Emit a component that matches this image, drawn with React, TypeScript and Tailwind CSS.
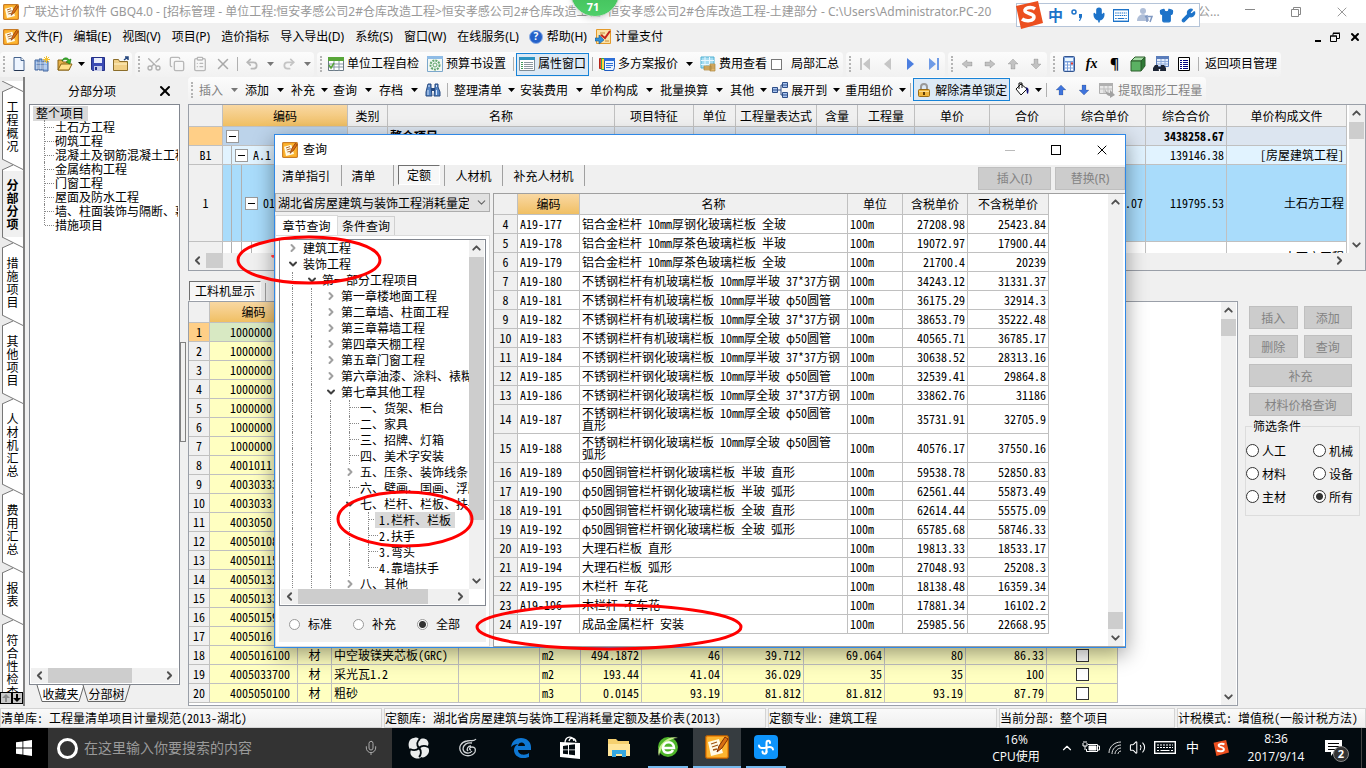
import type { ReactNode } from 'react';
import {
  ChevronDown,
  ChevronLeft,
  ChevronRight,
  ChevronUp,
  ClipboardList,
  Copy,
  Mic,
  Redo2,
  Scissors,
  Shirt,
  Undo2,
  Volume2,
  Wrench,
  X,
} from 'lucide-react';

/* ---------- data ---------- */

const sideTabs = ['工程概况', '分部分项', '措施项目', '其他项目', '人材机汇总', '费用汇总', '报表', '符合性检查结果'];

const sections = [
  '土石方工程',
  '砌筑工程',
  '混凝土及钢筋混凝土工程',
  '金属结构工程',
  '门窗工程',
  '屋面及防水工程',
  '墙、柱面装饰与隔断、幕墙工程',
  '措施项目',
];

const materialCodes = [
  '1000000', '1000000', '1000000', '1000000', '1000000', '1000000', '1000000', '4001011', '40030333', '4003033',
  '4003050', '40050108', '40050115', '40050132', '40050133', '40050159', '4005016',
];

const materials = [
  ['4005016100', '材', '中空玻镁夹芯板(GRC)', '', 'm2', '494.1872', '46', '39.712', '69.064', '80', '86.33'],
  ['4005033700', '材', '采光瓦1.2', '', 'm2', '193.44', '41.04', '36.029', '35', '35', '100'],
  ['4005050100', '材', '粗砂', '', 'm3', '0.0145', '93.19', '81.812', '81.812', '93.19', '87.79'],
];

const quotas = [
  ['铝合金栏杆 10mm厚钢化玻璃栏板 全玻', '27208.98', '25423.84'],
  ['铝合金栏杆 10mm厚茶色玻璃栏板 半玻', '19072.97', '17900.44'],
  ['铝合金栏杆 10mm厚茶色玻璃栏板 全玻', '21700.4', '20239'],
  ['不锈钢栏杆有机玻璃栏板 10mm厚半玻 37*37方钢', '34243.12', '31331.37'],
  ['不锈钢栏杆有机玻璃栏板 10mm厚半玻 φ50圆管', '36175.29', '32914.3'],
  ['不锈钢栏杆有机玻璃栏板 10mm厚全玻 37*37方钢', '38653.79', '35222.48'],
  ['不锈钢栏杆有机玻璃栏板 10mm厚全玻 φ50圆管', '40565.71', '36785.17'],
  ['不锈钢栏杆钢化玻璃栏板 10mm厚半玻 37*37方钢', '30638.52', '28313.16'],
  ['不锈钢栏杆钢化玻璃栏板 10mm厚半玻 φ50圆管', '32539.41', '29864.8'],
  ['不锈钢栏杆钢化玻璃栏板 10mm厚全玻 37*37方钢', '33862.76', '31186'],
  ['不锈钢栏杆钢化玻璃栏板 10mm厚全玻 φ50圆管\n直形', '35731.91', '32705.9'],
  ['不锈钢栏杆钢化玻璃栏板 10mm厚全玻 φ50圆管\n弧形', '40576.17', '37550.16'],
  ['φ50圆铜管栏杆钢化玻璃栏板 半玻 直形', '59538.78', '52850.83'],
  ['φ50圆铜管栏杆钢化玻璃栏板 半玻 弧形', '62561.44', '55873.49'],
  ['φ50圆铜管栏杆钢化玻璃栏板 全玻 直形', '62614.44', '55575.09'],
  ['φ50圆铜管栏杆钢化玻璃栏板 全玻 弧形', '65785.68', '58746.33'],
  ['大理石栏板 直形', '19813.33', '18533.17'],
  ['大理石栏板 弧形', '27048.93', '25208.3'],
  ['木栏杆 车花', '18138.48', '16359.34'],
  ['木栏杆 不车花', '17881.34', '16102.2'],
  ['成品金属栏杆 安装', '25985.56', '22668.95'],
];

type Node = { text: string; level: number; state: 'open' | 'closed' | 'leaf' | 'last'; selected?: boolean };

const chapters: Node[] = [
  { text: '建筑工程', level: 0, state: 'closed' },
  { text: '装饰工程', level: 0, state: 'open' },
  { text: '第一部分工程项目', level: 1, state: 'open' },
  { text: '第一章楼地面工程', level: 2, state: 'closed' },
  { text: '第二章墙、柱面工程', level: 2, state: 'closed' },
  { text: '第三章幕墙工程', level: 2, state: 'closed' },
  { text: '第四章天棚工程', level: 2, state: 'closed' },
  { text: '第五章门窗工程', level: 2, state: 'closed' },
  { text: '第六章油漆、涂料、裱糊工程', level: 2, state: 'closed' },
  { text: '第七章其他工程', level: 2, state: 'open' },
  { text: '一、货架、柜台', level: 3, state: 'leaf' },
  { text: '二、家具', level: 3, state: 'leaf' },
  { text: '三、招牌、灯箱', level: 3, state: 'leaf' },
  { text: '四、美术字安装', level: 3, state: 'leaf' },
  { text: '五、压条、装饰线条', level: 3, state: 'closed' },
  { text: '六、壁画、国画、浮雕', level: 3, state: 'leaf' },
  { text: '七、栏杆、栏板、扶手', level: 3, state: 'open' },
  { text: '1.栏杆、栏板', level: 4, state: 'leaf', selected: true },
  { text: '2.扶手', level: 4, state: 'leaf' },
  { text: '3.弯头', level: 4, state: 'leaf' },
  { text: '4.靠墙扶手', level: 4, state: 'last' },
  { text: '八、其他', level: 3, state: 'closed' },
];

/* ---------- icons ---------- */

function AppIcon({ className = 'size-4' }: { className?: string }) {
  return (
    <svg viewBox="0 0 24 24" className={`shrink-0 ${className}`}>
      <rect x="0.5" y="0.5" width="23" height="23" rx="2" fill="#ee8c12" stroke="#a85a08" />
      <rect x="2" y="2" width="20" height="20" rx="1" fill="#fbb431" />
      <path d="M3 7l11-3 4 14-12 3z" fill="#fffbe8" />
      <path d="M6 9l6-2M7 12l6-2M8 15l4-1" stroke="#a05414" strokeWidth="1.3" />
      <path d="M20 2l-6 9-2 6 5-4 6-9z" fill="#d96f12" stroke="#7c2d06" />
    </svg>
  );
}

function NewIcon() {
  return (
    <svg viewBox="0 0 16 16" className="size-4">
      <path d="M3 1.500h7l3 3v10H3z" fill="#eef5ff" stroke="#45638d" />
      <path d="M10 1.500v3h3" fill="#fff" stroke="#45638d" />
      <path d="M12.500 14.500h-9" stroke="#24344f" />
    </svg>
  );
}

function LibraryIcon() {
  return (
    <svg viewBox="0 0 16 16" className="size-4">
      <path d="M1 4h3v10H1zM5 3h3v11H5zM9 5h5v10H9z" fill="#8fb4e6" stroke="#46699f" />
      <path d="M2 7h11M2 10h11M2 12h11" stroke="#fff" strokeWidth="0.7" />
      <path d="M12.500 0v7M9 3.500h7M10 1l5 5M15 1l-5 5" stroke="#f2c12e" />
    </svg>
  );
}

function OpenIcon() {
  return (
    <svg viewBox="0 0 16 16" className="size-4">
      <path d="M1 14V4h4l1 2h6v8z" fill="#e6b04a" stroke="#8a6414" />
      <path d="M1 14l3-6h11l-3 6z" fill="#ffe08a" stroke="#8a6414" />
      <path d="M5 5c1-4 6-4 7-1l2-1-1 5-4-2 2-1c-1-2-4-2-6 0z" fill="#38b62c" stroke="#16700f" strokeWidth="0.6" />
    </svg>
  );
}

function SaveIcon() {
  return (
    <svg viewBox="0 0 16 16" className="size-4">
      <path d="M1.500 1.500h13v13h-12l-1-1z" fill="#3b4bb4" stroke="#232f86" />
      <path d="M4 2h8v5H4z" fill="#e9edfb" />
      <path d="M4 10h8v5H4z" fill="#c7cdea" />
      <path d="M5 11h2v3H5z" fill="#232f86" />
    </svg>
  );
}

function FolderIcon() {
  return (
    <svg viewBox="0 0 16 16" className="size-4">
      <path d="M0.500 14.500v-11h5l1 2h8v9z" fill="#f0cf86" stroke="#8b6d2a" />
      <path d="M1 8h13" stroke="#fff2c9" />
      <path d="M11 4l4-3M12 1h3v3" stroke="#26477e" fill="none" strokeWidth="1.500" />
    </svg>
  );
}

function SheetIcon({ head }: { head: string }) {
  return (
    <svg viewBox="0 0 16 16" className="size-4 shrink-0">
      <path d="M0.500 1.500h15v13H0.500z" fill="#fff" stroke="#6b7a86" />
      <path d="M0 1h16v4H0z" fill={head} />
      <path d="M1 8h14M1 11h14M6 5v10M11 5v10" stroke="#8797a3" />
      <path d="M1 9l2 3 3-5" stroke={head} strokeWidth="1.500" fill="none" />
    </svg>
  );
}

function SheetArrowIcon() {
  return (
    <svg viewBox="0 0 16 16" className="size-4 shrink-0">
      <path d="M0.500 1.500h13v10H0.500z" fill="#e8e8e8" stroke="#b0b0b0" />
      <path d="M0 1h14v3H0z" fill="#b0b0b0" />
      <path d="M1 7h12M5 4v7M9 4v7" stroke="#bdbdbd" />
      <path d="M6 7c1 3 3 4 5 4V8l5 5-5 3v-2c-3 0-5-3-5-7z" fill="#a2a2a2" />
    </svg>
  );
}

function SettingsSheetIcon() {
  return (
    <svg viewBox="0 0 16 16" className="size-4 shrink-0">
      <path d="M0.500 0.500h15v15H0.500z" fill="#f2f8f4" stroke="#7ba7cc" />
      <path d="M0 0h16v3H0z" fill="#8fbce6" />
      <circle cx="8" cy="9" r="4.500" fill="none" stroke="#62a56c" strokeWidth="2" strokeDasharray="2 1" />
      <circle cx="8" cy="9" r="2" fill="none" stroke="#62a56c" />
    </svg>
  );
}

function PanelIcon() {
  return (
    <svg viewBox="0 0 16 16" className="size-4 shrink-0">
      <path d="M0.500 1.500h15v13H0.500z" fill="#fff" stroke="#7e8c97" />
      <path d="M0 1h16v3H0z" fill="#2b93c2" />
      <path d="M2 6.500h2M2 8.500h2M2 10.500h2M2 12.500h2" stroke="#3f9b58" />
      <path d="M5 6.500h9M5 8.500h9M5 10.500h9M5 12.500h9" stroke="#8b979f" />
    </svg>
  );
}

function PlansIcon() {
  return (
    <svg viewBox="0 0 16 16" className="size-4 shrink-0">
      <path d="M0.500 2.500h5v10h-5z" fill="#f04a3a" stroke="#b52418" />
      <path d="M2.500 2.500h5v11h-5z" fill="#ffd83a" stroke="#3aa24a" />
      <path d="M5.500 2.500h10v9l-1 3h-9z" fill="#e9f2ff" stroke="#1e5bc0" />
      <path d="M5 2h11v3H5z" fill="#2e6fd6" />
      <path d="M7 7.500h7M7 9.500h7M7 11.500h5" stroke="#2e6fd6" />
    </svg>
  );
}

function FeeIcon() {
  return (
    <svg viewBox="0 0 16 16" className="size-4 shrink-0">
      <path d="M1 1h13v11H1z" fill="#a6dcf1" stroke="#4fb1d4" />
      <path d="M1 4.500h13M1 8.500h13M5 1v11M9.500 1v11" stroke="#e9f8ff" />
      <path d="M4 10h7v4H4zM10 8h5v7h-5z" fill="#e0b770" stroke="#a9843a" strokeWidth="0.7" />
      <path d="M10 10h5M10 12h5M4 12h6" stroke="#a9843a" strokeWidth="0.7" />
    </svg>
  );
}

function BinocularsIcon() {
  return (
    <svg viewBox="0 0 16 16" className="size-4">
      <path d="M3 2h3v3l1 9H1v-4zM10 2h3v3l2 5v4H9l1-9z" fill="#5585c4" stroke="#27497f" />
      <path d="M6 6h4v3H6z" fill="#27497f" />
      <path d="M3 8v5M11.500 8v5M4 3v2M11.500 3v2" stroke="#d5e5fb" />
    </svg>
  );
}

function ExpandIcon() {
  return (
    <svg viewBox="0 0 16 16" className="size-4 shrink-0">
      <path d="M6 8h3M9 3v10M9 3h2M9 13h2" stroke="#2d4d86" fill="none" />
      <path d="M0.500 5.500h5v5h-5zM10.500 0.500h5v5h-5zM10.500 10.500h5v5h-5z" fill="#a9c5f1" stroke="#2d4d86" />
      <path d="M1 8h4M11 3h4M11 13h4" stroke="#2d4d86" />
    </svg>
  );
}

function LockIcon() {
  return (
    <svg viewBox="0 0 16 16" className="size-4 shrink-0">
      <path d="M5 8V5a3 3 0 0 1 6 0v3" fill="none" stroke="#9a9a9a" strokeWidth="2" />
      <rect x="2.500" y="7.500" width="11" height="7" rx="1" fill="#f0b63c" stroke="#9a6a12" />
      <path d="M3 9.500h10" stroke="#fbdc8c" />
      <path d="M8 10v3" stroke="#5e3d05" strokeWidth="2" />
    </svg>
  );
}

function BucketIcon() {
  return (
    <svg viewBox="0 0 16 16" className="size-4">
      <path d="M2 7l5-5 6 5-6 6z" fill="#fff" stroke="#111" />
      <path d="M5 7V1h3v5" fill="none" stroke="#111" />
      <path d="M12 5c3 1 3 3 2 7-2-1-1-4-2-7z" fill="#12127a" />
    </svg>
  );
}

function ArrowIcon({ dir, color }: { dir: 'left' | 'right' | 'up' | 'down'; color: string }) {
  const paths = {
    left: 'M3 8l5-4v2h5v4H8v2z',
    right: 'M13 8L8 4v2H3v4h5v2z',
    up: 'M8 3l5 5h-3v5H6V8H3z',
    down: 'M8 13l5-5h-3V3H6v5H3z',
  };
  return (
    <svg viewBox="0 0 16 16" className="size-4">
      <path d={paths[dir]} fill={color} stroke="#00000022" />
    </svg>
  );
}

function JumpIcon({ d, color }: { d: string; color: string }) {
  return (
    <svg viewBox="0 0 16 16" className="size-4">
      <path d={d} fill={color} />
    </svg>
  );
}

function CalculatorIcon() {
  return (
    <svg viewBox="0 0 16 16" className="size-4">
      <rect x="2.500" y="0.500" width="11" height="15" rx="1" fill="#7ea2dc" stroke="#33558f" />
      <path d="M4 2h8v3H4z" fill="#e9f7ff" />
      <path d="M4 7.500h8M4 10.500h8M4 13.500h8" stroke="#fff" strokeWidth="2" strokeDasharray="2 1" />
      <path d="M10 7.500h2" stroke="#e23b2e" strokeWidth="2" />
    </svg>
  );
}

function CubeIcon() {
  return (
    <svg viewBox="0 0 16 16" className="size-4">
      <path d="M1 5l4-4h10l-4 4z" fill="#a5dba5" stroke="#2c5f2c" />
      <path d="M11 5l4-4v9l-4 5z" fill="#2f7a36" stroke="#2c5f2c" />
      <path d="M1 5h10v10H1z" fill="#5bb163" stroke="#2c5f2c" />
    </svg>
  );
}

function LookupIcon() {
  return (
    <svg viewBox="0 0 16 16" className="size-4">
      <path d="M3.500 0.500h12v10h-12z" fill="#e4edfb" stroke="#5a7dbb" />
      <path d="M3 0h13v3H3z" fill="#5a7dbb" />
      <path d="M4 5.500h11M4 8h11M8 3v7M12 3v7" stroke="#8eaadb" />
      <path d="M2 9h3l1 6H0v-3zM8 9h3l2 3v3H7zM4 11h4v2H4z" fill="#1c2434" />
    </svg>
  );
}

function ListIcon() {
  return (
    <svg viewBox="0 0 16 16" className="size-4">
      <path d="M2.500 1.500h11v13h-11z" fill="#fff" stroke="#000" />
      <path d="M4 4.500h2M4 6.500h2M4 8.500h2M4 10.500h2M4 12.500h2M7 4.500h5M7 6.500h5M7 8.500h5M7 10.500h5M7 12.500h5" stroke="#000080" />
    </svg>
  );
}

function PayIcon() {
  return (
    <svg viewBox="0 0 16 16" className="size-4">
      <path d="M1.500 0.500h14v14h-14z" fill="#fbe3a8" stroke="#e49a2a" />
      <path d="M5 4h5M5 6h3M10 12h4" stroke="#c58a3a" />
      <path d="M15 2l-5 7-4-3" fill="none" stroke="#c3261c" strokeWidth="2" />
      <path d="M0 9h4V6l5 5-5 4v-3H0z" fill="#2f8fd8" stroke="#155b95" strokeWidth="0.600" />
    </svg>
  );
}

function SogouIcon({ className }: { className: string }) {
  return (
    <svg viewBox="0 0 28 28" className={`shrink-0 ${className}`}>
      <path d="M1 5L23 0l5 22-22 6z" fill="#ec4f1f" />
      <path d="M20 8c-4-3-11-1-10 2s9 2 9 6-8 5-12 2" fill="none" stroke="#fff" strokeWidth="3.500" />
    </svg>
  );
}

/* ---------- small pieces ---------- */

function Caret({ tight, dim }: { tight?: boolean; dim?: boolean }) {
  return (
    <span className={`flex shrink-0 justify-center ${tight ? 'w-[10px]' : 'w-[14px]'}`}>
      <svg viewBox="0 0 7 4" className="h-1 w-[7px]">
        <path d="M0 0h7L3.500 4z" fill={dim ? '#777' : '#000'} />
      </svg>
    </span>
  );
}

function Grip() {
  return (
    <span className="flex w-[7px] shrink-0 justify-center">
      <span className="h-4 border-l-2 border-dotted border-[#b4b4b4]" />
    </span>
  );
}

function Divider() {
  return (
    <span className="flex w-[6px] shrink-0 justify-center">
      <span className="h-[14px] border-l border-[#b0b0b0]" />
    </span>
  );
}

function ToolGroup({ children }: { children: ReactNode }) {
  return (
    <div className="flex h-[25px] shrink-0 items-center rounded-sm bg-gradient-to-b from-[#fcfcfc] to-[#f1f1f1]">
      <Grip />
      {children}
    </div>
  );
}

function IconButton({ label, children }: { label: string; children: ReactNode }) {
  return (
    <button type="button" aria-label={label} className="flex w-[23px] shrink-0 items-center justify-center">
      {children}
    </button>
  );
}

function ToolButton({ icon, children, active, dim }: { icon?: ReactNode; children: ReactNode; active?: boolean; dim?: boolean }) {
  return (
    <button
      type="button"
      className={`flex h-[23px] shrink-0 items-center gap-[3px] whitespace-nowrap ${
        active ? 'border border-[#1883d7] bg-[#dce9f5] px-[2px]' : 'px-1'
      } ${dim ? 'text-[#838383]' : ''}`}
    >
      {icon}
      {children}
    </button>
  );
}

function VScroll({ before, thumb }: { before: string; thumb: string }) {
  return (
    <div className="flex w-[15px] shrink-0 flex-col items-center bg-[#f0f0f0] text-[#505050]">
      <ChevronUp className="h-4 w-[13px] shrink-0" strokeWidth={3.5} />
      <span className={before} />
      <span className={`w-full shrink-0 bg-[#cdcdcd] ${thumb}`} />
      <span className="flex-1" />
      <ChevronDown className="h-4 w-[13px] shrink-0" strokeWidth={3.5} />
    </div>
  );
}

function HScroll({ thumb }: { thumb: string }) {
  return (
    <div className="flex h-[15px] shrink-0 items-center bg-[#f0f0f0] text-[#505050]">
      <ChevronLeft className="h-[13px] w-[17px] shrink-0" strokeWidth={3.5} />
      <span className={`h-full shrink-0 bg-[#cdcdcd] ${thumb}`} />
      <span className="flex-1" />
      <ChevronRight className="h-[13px] w-[17px] shrink-0" strokeWidth={3.5} />
    </div>
  );
}

const gold = 'bg-gradient-to-b from-[#f9d8a2] to-[#f0bf62]';
const cell = 'border-r border-b border-[#c0c0c0] p-0 px-[2px] overflow-hidden whitespace-nowrap';
const head = 'border-r border-b border-[#c0c0c0] p-0 font-normal overflow-hidden whitespace-nowrap';
const grayButton = 'h-[23px] border border-[#bfbfbf] bg-[#cccccc] text-[#838383]';
const radio =
  'appearance-none rounded-full border bg-white checked:bg-[radial-gradient(circle,#333_0_3px,#fff_4px)] shrink-0';

/* ---------- window chrome ---------- */

function TitleBar() {
  return (
    <header className="relative flex h-[23px] shrink-0 items-center bg-white pl-[3px] text-[#999]">
      <AppIcon />
      <span className="ml-1 w-[993px] shrink-0 overflow-hidden whitespace-nowrap">
        广联达计价软件 GBQ4.0 - [招标管理 - 单位工程:恒安孝感公司2#仓库改造工程&gt;恒安孝感公司2#仓库改造工程&gt;恒安孝感公司2#仓库改造工程-土建部分 -
        C:\Users\Administrator.PC-20
      </span>
      <span className="ml-[170px] whitespace-nowrap">感公...</span>
      <div className="ml-auto flex items-center gap-[30px] pr-4">
        <button type="button" aria-label="最小化" className="w-4 pb-1">
          <span className="mx-auto block h-px w-[10px] bg-[#888]" />
        </button>
        <button type="button" aria-label="还原">
          <svg viewBox="0 0 16 16" className="size-4" fill="none" stroke="#888">
            <path d="M3.500 5.500h7v7h-7zM5.500 5V3.500h7v7H11" />
          </svg>
        </button>
        <button type="button" aria-label="关闭">
          <X className="size-4" strokeWidth={1.5} />
        </button>
      </div>

      <div className="absolute -top-[33px] left-[570px] z-10 flex size-[50px] items-end justify-center rounded-full border border-[#cfd8cf] bg-gradient-to-b from-[#35b14c] to-[#4fd06a] pr-1 pb-1 text-[11px] leading-none font-bold text-white shadow-md">
        71
      </div>
      <div className="absolute top-[3px] left-[1016px] z-10 flex h-6 w-[184px] items-center border border-[#b5c4d8] bg-white text-[#1d73c9]">
        <SogouIcon className="-ml-[2px] size-7" />
        <span className="ml-[5px] text-[15px] font-bold">中</span>
        <svg viewBox="0 0 12 12" className="ml-2 size-3 shrink-0">
          <circle cx="3" cy="3" r="2" fill="none" stroke="#1d73c9" strokeWidth="1.500" />
          <path d="M8 5h3v3l-2 4H8l1-3H8z" fill="#1d73c9" />
        </svg>
        <Mic className="ml-2 size-4 shrink-0" strokeWidth={2.5} fill="#1d73c9" />
        <KeyboardIcon className="ml-[6px] h-[13px] w-4" />
        <svg viewBox="0 0 16 16" className="ml-2 size-4 shrink-0" fill="#b0bfd8">
          <circle cx="6" cy="4" r="3" />
          <path d="M0 14c0-9 12-9 12 0z" />
          <path d="M8 10l2-1v6M11 9.500h4l-2 5.500" fill="none" stroke="#7f98c2" strokeWidth="1.500" />
        </svg>
        <Shirt className="ml-[6px] size-[15px] shrink-0" fill="#1d73c9" />
        <Wrench className="ml-[7px] size-[15px] shrink-0" fill="#1d73c9" />
      </div>
    </header>
  );
}

function KeyboardIcon({ className }: { className: string }) {
  return (
    <svg viewBox="0 0 22 13" preserveAspectRatio="none" className={`shrink-0 ${className}`} fill="none" stroke="currentColor">
      <rect x="0.700" y="0.700" width="20.600" height="11.600" strokeWidth="1.400" />
      <path d="M3 4h16M3 6.500h16" strokeDasharray="2 1" strokeWidth="1.200" />
      <path d="M3 9.500h2M6.500 9.500h9M17 9.500h2" strokeWidth="1.200" />
    </svg>
  );
}

function MenuBar() {
  const menus = ['文件(F)', '编辑(E)', '视图(V)', '项目(P)', '造价指标', '导入导出(D)', '系统(S)', '窗口(W)', '在线服务(L)'];
  return (
    <nav className="flex h-7 shrink-0 items-center bg-[#f0f0f0] pl-[3px]">
      <AppIcon />
      <div className="ml-[6px] flex items-center gap-[11px]">
        {menus.map((m) => (
          <button key={m} type="button" className="whitespace-nowrap">
            {m}
          </button>
        ))}
        <button type="button" className="-ml-px flex items-center gap-1 whitespace-nowrap">
          <span className="flex size-[14px] items-center justify-center rounded-full border border-[#8fb0e6] bg-[#2461c9] text-[10px] font-bold text-white">
            ?
          </span>
          帮助(H)
        </button>
        <button type="button" className="-ml-[3px] flex items-center gap-1 whitespace-nowrap">
          <PayIcon />
          计量支付
        </button>
      </div>
      <div className="ml-auto flex items-center gap-[9px] pr-[5px]">
        <button type="button" aria-label="最小化子窗口" className="flex h-[9px] items-end">
          <span className="h-[2px] w-[6px] bg-black" />
        </button>
        <button type="button" aria-label="还原子窗口">
          <svg viewBox="0 0 10 10" className="size-[10px]" fill="none" stroke="#000">
            <path d="M0.500 4h6v5.500h-6zM0 4h7M3 3.500V1.500h6.500v5H7M3 1h7" />
          </svg>
        </button>
        <button type="button" aria-label="关闭子窗口">
          <X className="size-3 text-black" strokeWidth={4} />
        </button>
      </div>
    </nav>
  );
}

function MainToolbar() {
  return (
    <div className="flex h-[26px] shrink-0 items-center gap-[3px] overflow-hidden bg-[#f0f0f0]">
      <ToolGroup>
        <IconButton label="新建"><NewIcon /></IconButton>
        <IconButton label="新建工程"><LibraryIcon /></IconButton>
        <IconButton label="打开"><OpenIcon /></IconButton>
        <Caret tight />
        <IconButton label="保存"><SaveIcon /></IconButton>
        <IconButton label="目录"><FolderIcon /></IconButton>
      </ToolGroup>
      <ToolGroup>
        <IconButton label="剪切"><Scissors className="size-4 -rotate-90 text-[#b0b0b0]" /></IconButton>
        <IconButton label="复制"><Copy className="size-4 text-[#b8b8b8]" /></IconButton>
        <IconButton label="粘贴"><ClipboardList className="size-4 text-[#b8b8b8]" /></IconButton>
        <IconButton label="删除"><X className="size-[18px] text-[#a8a8a8]" /></IconButton>
        <Divider />
        <IconButton label="撤销"><Undo2 className="size-[14px] text-[#b8b8b8]" strokeWidth={3} /></IconButton>
        <Caret dim />
        <IconButton label="重做"><Redo2 className="size-[14px] text-[#c4c4c4]" strokeWidth={3} /></IconButton>
        <Caret dim />
      </ToolGroup>
      <ToolGroup>
        <ToolButton icon={<SheetIcon head="#58a639" />}>单位工程自检</ToolButton>
        <ToolButton icon={<SettingsSheetIcon />}>预算书设置</ToolButton>
        <Divider />
        <ToolButton active icon={<PanelIcon />}>属性窗口</ToolButton>
        <Divider />
        <ToolButton icon={<PlansIcon />}>多方案报价</ToolButton>
        <Caret />
        <ToolButton icon={<FeeIcon />}>费用查看</ToolButton>
        <label className="mr-1 flex items-center gap-[9px] whitespace-nowrap">
          <input type="checkbox" className="size-[11px] appearance-none border border-[#777] bg-white" />
          局部汇总
        </label>
      </ToolGroup>
      <ToolGroup>
        <IconButton label="首条"><JumpIcon color="#c6c6c6" d="M3 2h2v12H3zM13 2v12L6 8z" /></IconButton>
        <IconButton label="上一条"><JumpIcon color="#c6c6c6" d="M11 2v12L4 8z" /></IconButton>
        <IconButton label="下一条"><JumpIcon color="#4c7fe0" d="M4 2v12l7-6z" /></IconButton>
        <IconButton label="末条"><JumpIcon color="#6f9be6" d="M3 2v12l7-6zM11 2h2v12h-2z" /></IconButton>
      </ToolGroup>
      <ToolGroup>
        <IconButton label="左移"><ArrowIcon dir="left" color="#c2c2c2" /></IconButton>
        <IconButton label="右移"><ArrowIcon dir="right" color="#c2c2c2" /></IconButton>
        <IconButton label="上移"><ArrowIcon dir="up" color="#c2c2c2" /></IconButton>
        <IconButton label="下移"><ArrowIcon dir="down" color="#c2c2c2" /></IconButton>
      </ToolGroup>
      <ToolGroup>
        <IconButton label="计算器"><CalculatorIcon /></IconButton>
        <IconButton label="公式">
          <span className="font-['Liberation_Serif',serif] text-sm leading-none font-bold italic">fx</span>
        </IconButton>
        <IconButton label="段落"><span className="text-sm leading-none font-bold">¶</span></IconButton>
        <IconButton label="图形"><CubeIcon /></IconButton>
        <IconButton label="查找"><LookupIcon /></IconButton>
        <IconButton label="列表"><ListIcon /></IconButton>
        <Divider />
        <ToolButton>返回项目管理</ToolButton>
      </ToolGroup>
    </div>
  );
}

function EditToolbar() {
  return (
    <div className="flex h-[27px] shrink-0 items-start">
      <ToolGroup>
        <ToolButton dim>插入</ToolButton>
        <Caret dim />
        <ToolButton>添加</ToolButton>
        <Caret />
        <ToolButton>补充</ToolButton>
        <Caret tight />
        <ToolButton>查询</ToolButton>
        <Caret />
        <ToolButton>存档</ToolButton>
        <Caret />
        <IconButton label="查找"><BinocularsIcon /></IconButton>
        <Divider />
        <ToolButton>整理清单</ToolButton>
        <Caret tight />
        <ToolButton>安装费用</ToolButton>
        <Caret />
        <ToolButton>单价构成</ToolButton>
        <Caret />
        <ToolButton>批量换算</ToolButton>
        <Caret />
        <ToolButton>其他</ToolButton>
        <Caret tight />
        <ToolButton icon={<ExpandIcon />}>展开到</ToolButton>
        <Caret tight />
        <ToolButton>重用组价</ToolButton>
        <Caret tight />
        <Divider />
        <ToolButton active icon={<LockIcon />}>解除清单锁定</ToolButton>
        <IconButton label="填充颜色"><BucketIcon /></IconButton>
        <Caret tight />
        <Divider />
        <IconButton label="上移"><ArrowIcon dir="up" color="#3f74dc" /></IconButton>
        <IconButton label="下移"><ArrowIcon dir="down" color="#3f74dc" /></IconButton>
        <ToolButton dim icon={<SheetArrowIcon />}>提取图形工程量</ToolButton>
      </ToolGroup>
    </div>
  );
}

/* ---------- left side ---------- */

function TabNotch() {
  return (
    <svg viewBox="0 0 24 12" className="h-3 w-6 shrink-0">
      <path d="M2 0h22v12H2v-1l11-5z" fill="#fff" />
      <path d="M2 0L24 11M2 11L13 6M2.500 11v1" fill="none" stroke="#777" />
    </svg>
  );
}

function SideTabs() {
  return (
    <div className="flex w-[25px] shrink-0 flex-col border-r-2 border-[#808080] bg-[#ebebeb]">
      <nav className="min-h-0 flex-1 overflow-hidden pt-1">
        {sideTabs.map((name) => {
          const selected = name === '分部分项';
          return (
            <div key={name}>
              <TabNotch />
              <button
                type="button"
                className={`ml-[2px] flex w-[22px] justify-center border-l border-[#777] py-[7px] pr-[2px] leading-[13px] ${
                  selected ? 'bg-[#f0f0f0] font-bold' : 'bg-white'
                }`}
              >
                <span className="w-3 break-all">{name}</span>
              </button>
            </div>
          );
        })}
      </nav>
      <div className="mb-[2px] flex h-3 shrink-0">
        <button type="button" aria-label="向上滚动" className="flex flex-1 items-center justify-center border border-black bg-[#c8c8c8]">
          <svg viewBox="0 0 8 8" className="size-2"><path d="M4 0l4 4H5v4H3V4H0z" fill="#8a8a8a" /></svg>
        </button>
        <button type="button" aria-label="向下滚动" className="flex flex-1 items-center justify-center border border-black bg-[#c8c8c8]">
          <svg viewBox="0 0 8 8" className="size-2"><path d="M4 8l4-4H5V0H3v4H0z" fill="#000" /></svg>
        </button>
      </div>
    </div>
  );
}

function SheetTab({ children, front }: { children: string; front?: boolean }) {
  return (
    <button type="button" className={`relative h-[18px] w-[49px] ${front ? '' : '-ml-[3px]'}`}>
      <svg viewBox="0 0 49 18" className="absolute inset-0 h-[18px] w-[49px]">
        <path d="M1 0l5 16.500h37L48 0" fill={front ? '#fff' : '#f0f0f0'} stroke="#666" />
      </svg>
      <span className="relative leading-[16px]">{children}</span>
    </button>
  );
}

function SectionPanel() {
  return (
    <aside className="flex w-[155px] shrink-0 flex-col pl-1">
      <div className="flex h-[27px] shrink-0 items-center pr-[7px]">
        <span className="ml-[39px]">分部分项</span>
        <button type="button" aria-label="关闭面板" className="ml-auto">
          <X className="size-4" strokeWidth={3} />
        </button>
      </div>
      <div className="flex min-h-0 flex-1 flex-col border border-[#828790] bg-white p-px">
        <div className="flex-1 overflow-hidden pl-[2px] leading-[14px] whitespace-nowrap">
          <div>
            <span className="bg-[#d9d9d9] pr-1 pl-[3px]">整个项目</span>
          </div>
          <ul>
            {sections.map((s, i) => (
              <li key={s} className="flex h-[14px]">
                <span className={`ml-[11px] w-px shrink-0 border-l border-dotted border-[#888] ${i === sections.length - 1 ? 'h-[7px]' : ''}`} />
                <span className="h-[8px] w-[9px] shrink-0 border-b border-dotted border-[#888]" />
                <span className="ml-px">{s}</span>
              </li>
            ))}
          </ul>
        </div>
        <HScroll thumb="w-[84px]" />
      </div>
      <div className="flex h-[21px] shrink-0 pl-[7px]">
        <SheetTab front>收藏夹</SheetTab>
        <SheetTab>分部树</SheetTab>
      </div>
    </aside>
  );
}

/* ---------- grids ---------- */

function Toggle() {
  return (
    <span className="flex size-[13px] shrink-0 items-center justify-center border border-[#999] bg-white">
      <span className="h-px w-[7px] bg-black" />
    </span>
  );
}

function ProjectGrid() {
  const heads = ['类别', '名称', '项目特征', '单位', '工程量表达式', '含量', '工程量', '单价', '合价', '综合单价', '综合合价', '单价构成文件'];
  return (
    <section className="flex h-[167px] shrink-0 flex-col border border-[#9a9fa8] bg-[#f0f0f0] pr-px">
      <div className="flex h-[148px] shrink-0">
        <div className="min-w-0 flex-1 overflow-hidden bg-white pr-[2px]">
          <table className="w-full table-fixed border-separate border-spacing-0">
            <colgroup>
              <col className="w-[34px]" />
              <col className="w-[125px]" />
              <col className="w-[40px]" />
              <col />
              <col className="w-[79px]" />
              <col className="w-[42px]" />
              <col className="w-[81px]" />
              <col className="w-[41px]" />
              <col className="w-[57px]" />
              <col className="w-[75px]" />
              <col className="w-[75px]" />
              <col className="w-[81px]" />
              <col className="w-[81px]" />
              <col className="w-[120px]" />
            </colgroup>
            <thead>
              <tr className="h-[22px] bg-[#f0f0f0]">
                <th className={head} />
                <th className={`${head} ${gold}`}>编码</th>
                {heads.map((h) => (
                  <th key={h} className={head}>{h}</th>
                ))}
              </tr>
            </thead>
            <tbody>
              <tr className="h-[19px] bg-[#dce5f0] font-bold">
                <td className={`${cell} bg-[#ffcf87]`} />
                <td className={`${cell} bg-[#bcd3ea]`}>
                  <span className="flex pl-px"><Toggle /></span>
                </td>
                <td className={cell} />
                <td className={cell}>整个项目</td>
                {[4, 5, 6, 7, 8, 9, 10, 11].map((i) => <td key={i} className={cell} />)}
                <td className={`${cell} text-right`}>3438258.67</td>
                <td className={cell} />
              </tr>
              <tr className="h-[19px] bg-[#e1f3ff]">
                <td className={`${cell} bg-[#f0f0f0] text-center`}>B1</td>
                <td className={cell}>
                  <span className="flex h-[18px] items-center pl-[6px]">
                    <span className="h-full w-1 border-l border-[#b0b0b0]" />
                    <Toggle />
                    <span className="ml-[5px]">A.1</span>
                  </span>
                </td>
                {[2, 3, 4, 5, 6, 7, 8, 9, 10, 11].map((i) => <td key={i} className={cell} />)}
                <td className={`${cell} text-right`}>139146.38</td>
                <td className={`${cell} text-right`}>[房屋建筑工程]</td>
              </tr>
              <tr className="h-[77px] bg-[#a9dcfb]">
                <td className={`${cell} bg-[#f0f0f0] text-center`}>1</td>
                <td className={cell}>
                  <span className="flex h-[76px] items-center pl-[6px]">
                    <span className="h-full w-[10px] border-l border-[#b0b0b0]" />
                    <span className="h-full w-1 border-l border-[#b0b0b0]" />
                    <Toggle />
                    <span className="ml-[5px]">01</span>
                  </span>
                </td>
                {[2, 3, 4, 5, 6, 7, 8, 9, 10].map((i) => <td key={i} className={cell} />)}
                <td className={`${cell} text-right`}>.07</td>
                <td className={`${cell} text-right`}>119795.53</td>
                <td className={`${cell} text-right`}>土石方工程</td>
              </tr>
              <tr className="h-[30px]">
                <td className={`${cell} bg-[#f0f0f0]`} />
                <td className={cell}>
                  <span className="flex h-[30px] pl-[6px]">
                    <span className="w-[10px] border-l border-[#b0b0b0]" />
                    <span className="w-[10px] border-l border-[#b0b0b0]" />
                    <span className="w-[10px] border-l border-[#b0b0b0]" />
                  </span>
                </td>
                {[2, 3, 4, 5, 6, 7, 8, 9, 10, 11, 12].map((i) => <td key={i} className={cell} />)}
                <td className={`${cell} text-right`}>土石方工程</td>
              </tr>
            </tbody>
          </table>
        </div>
        <VScroll before="h-px" thumb="h-[17px]" />
      </div>
      <div className="pr-4">
        <HScroll thumb="w-[17px]" />
      </div>
    </section>
  );
}

function MaterialGrid() {
  return (
    <section className="flex min-w-0 flex-1 border border-[#9a9fa8] bg-white pr-px">
      <div className="min-w-0 flex-1 overflow-hidden">
        <table className="w-[929px] table-fixed border-separate border-spacing-0">
          <colgroup>
            <col className="w-[21px]" />
            <col className="w-[88px]" />
            <col className="w-[34px]" />
            <col className="w-[127px]" />
            <col className="w-[81px]" />
            <col className="w-[41px]" />
            <col className="w-[61px]" />
            <col className="w-[81px]" />
            <col className="w-[81px]" />
            <col className="w-[81px]" />
            <col className="w-[81px]" />
            <col className="w-[81px]" />
            <col className="w-[71px]" />
          </colgroup>
          <thead>
            <tr className="h-[21px] bg-[#f0f0f0]">
              <th className={head} />
              <th className={`${head} ${gold}`}>编码</th>
              {[2, 3, 4, 5, 6, 7, 8, 9, 10, 11, 12].map((c) => <th key={c} className={head} />)}
            </tr>
          </thead>
          <tbody>
            {materialCodes.map((code, i) => (
              <tr key={i} className="h-[19px] bg-[#ffffc1]">
                <td className={`${cell} text-center ${i === 0 ? 'bg-[#ffcf87]' : 'bg-[#f0f0f0]'}`}>{i + 1}</td>
                <td className={`${cell} ${i === 0 ? 'bg-[#d8e9c3]' : ''}`}>
                  <span className="pl-[18px]">{code}</span>
                </td>
                {[2, 3, 4, 5, 6, 7, 8, 9, 10, 11, 12].map((c) => <td key={c} className={cell} />)}
              </tr>
            ))}
            {materials.map((row, i) => (
              <tr key={row[0]} className="h-[19px] bg-[#ffffc1]">
                <td className={`${cell} bg-[#f0f0f0] text-center`}>{18 + i}</td>
                {row.map((value, c) => (
                  <td key={c} className={`${cell} ${c > 4 ? 'text-right' : c === 1 ? 'text-center' : ''}`}>
                    <span className={c === 0 ? 'pl-[18px]' : ''}>{value}</span>
                  </td>
                ))}
                <td className={cell}>
                  <input
                    type="checkbox"
                    aria-label={`选择 ${row[2]}`}
                    className="mx-auto block size-[13px] appearance-none border border-[#333] bg-white"
                  />
                </td>
              </tr>
            ))}
          </tbody>
        </table>
      </div>
      <VScroll before="h-px" thumb="h-[17px]" />
    </section>
  );
}

function FilterRadio({ children, checked }: { children: string; checked?: boolean }) {
  return (
    <label className="flex h-[23px] items-center gap-[3px]">
      <input type="radio" name="kind" defaultChecked={checked} className={`${radio} size-[13px] border-[#333]`} />
      {children}
    </label>
  );
}

function ActionPanel() {
  return (
    <aside className="w-32 shrink-0 pt-[5px] pr-[6px] pl-[7px]">
      <div className="grid grid-cols-2 gap-[6px] pr-2 pl-1">
        <button type="button" className={grayButton}>插入</button>
        <button type="button" className={grayButton}>添加</button>
        <button type="button" className={grayButton}>删除</button>
        <button type="button" className={grayButton}>查询</button>
        <button type="button" className={`${grayButton} col-span-2`}>补充</button>
        <button type="button" className={`${grayButton} col-span-2`}>材料价格查询</button>
      </div>
      <fieldset className="mt-[3px] h-[97px] border border-[#dcdcdc]">
        <legend className="ml-[6px] px-px leading-[14px]">筛选条件</legend>
        <div className="grid grid-cols-[67px_1fr] pt-[6px]">
          <FilterRadio>人工</FilterRadio>
          <FilterRadio>机械</FilterRadio>
          <FilterRadio>材料</FilterRadio>
          <FilterRadio>设备</FilterRadio>
          <FilterRadio>主材</FilterRadio>
          <FilterRadio checked>所有</FilterRadio>
        </div>
      </fieldset>
    </aside>
  );
}

/* ---------- query window ---------- */

function TreeRow({ node }: { node: Node }) {
  const leaf = node.state === 'leaf' || node.state === 'last';
  return (
    <li className="flex h-4 shrink-0 items-center">
      {Array.from({ length: node.level }, (_, i) => (
        <span key={i} className="ml-[9px] h-full w-[10px] shrink-0 border-l border-dotted border-[#888]" />
      ))}
      {leaf ? (
        <span className="flex h-full w-[19px] shrink-0 pl-[9px]">
          <span className={`border-l border-dotted border-[#888] ${node.state === 'last' ? 'h-2' : 'h-full'}`} />
          <span className="h-2 w-[9px] border-b border-dotted border-[#888]" />
        </span>
      ) : (
        <span className="flex w-[19px] shrink-0 justify-center">
          {node.state === 'open' ? (
            <ChevronDown className="size-3 text-[#404040]" strokeWidth={4} />
          ) : (
            <ChevronRight className="size-3 text-[#a0a0a0]" strokeWidth={4} />
          )}
        </span>
      )}
      <span className={`h-full leading-4 whitespace-nowrap ${node.selected ? '-ml-[3px] bg-[#d9d9d9] px-1' : 'pl-px'}`}>{node.text}</span>
    </li>
  );
}

function ChapterPane() {
  return (
    <div className="flex w-[215px] shrink-0 flex-col">
      <div className="relative">
        <select
          aria-label="定额库"
          className="block h-[19px] w-full appearance-none overflow-hidden border border-[#adadad] bg-[#e1e1e1] pr-5 pl-[2px] leading-none"
        >
          <option>湖北省房屋建筑与装饰工程消耗量定</option>
        </select>
        <ChevronDown className="pointer-events-none absolute top-[3px] right-[2px] size-[13px] text-[#666]" />
      </div>
      <div className="mt-[3px] flex h-5 shrink-0 items-end">
        <button type="button" className="h-5 w-[63px] border border-b-0 border-[#dadada] bg-white">章节查询</button>
        <button type="button" className="h-[19px] w-[57px] border border-b-0 border-l-0 border-[#d0d0d0]">条件查询</button>
      </div>
      <div className="flex min-h-0 flex-1 flex-col border border-[#dcdcdc] bg-white px-[3px] pt-[3px] pb-1">
        <div className="flex h-[367px] shrink-0 flex-col border border-[#828790] px-px pb-px">
          <div className="flex min-h-0 flex-1">
            <ul className="min-w-0 flex-1 overflow-hidden pl-[2px]">
              {chapters.map((n) => (
                <TreeRow key={n.text} node={n} />
              ))}
            </ul>
            <VScroll before="h-px" thumb="h-[263px]" />
          </div>
          <div className="pr-[15px]">
            <HScroll thumb="w-[130px]" />
          </div>
        </div>
        <div className="flex flex-1 items-center gap-[21px] bg-[#f0f0f0] pl-[10px]">
          {['标准', '补充', '全部'].map((t) => (
            <label key={t} className="flex items-center gap-2">
              <input type="radio" name="scope" defaultChecked={t === '全部'} className={`${radio} size-[11px] border-[#999]`} />
              {t}
            </label>
          ))}
        </div>
      </div>
    </div>
  );
}

function QuotaGrid() {
  return (
    <div className="ml-[3px] flex min-w-0 flex-1 border border-r-0 border-[#a0a0a0] bg-white pr-[2px]">
      <div className="min-w-0 flex-1 overflow-hidden">
        <table className="w-[555px] table-fixed border-separate border-spacing-0 leading-3">
          <colgroup>
            <col className="w-[24px]" />
            <col className="w-[62px]" />
            <col className="w-[268px]" />
            <col className="w-[55px]" />
            <col className="w-[65px]" />
            <col className="w-[81px]" />
          </colgroup>
          <thead>
            <tr className="h-[21px] bg-[#f0f0f0]">
              <th className={head} />
              <th className={`${head} ${gold}`}>编码</th>
              <th className={head}>名称</th>
              <th className={head}>单位</th>
              <th className={head}>含税单价</th>
              <th className={head}>不含税单价</th>
            </tr>
          </thead>
          <tbody>
            {quotas.map(([name, taxed, untaxed], i) => (
              <tr key={i} className={name.includes('\n') ? 'h-[29px]' : 'h-[19px]'}>
                <td className={`${cell} bg-[#f0f0f0] text-center`}>{i + 4}</td>
                <td className={cell}>A19-{177 + i}</td>
                <td className="overflow-hidden border-r border-b border-[#c0c0c0] p-0 px-[2px] whitespace-pre">{name}</td>
                <td className={cell}>100m</td>
                <td className={`${cell} text-right`}>{taxed}</td>
                <td className={`${cell} text-right`}>{untaxed}</td>
              </tr>
            ))}
          </tbody>
        </table>
      </div>
      <VScroll before="flex-[500]" thumb="h-[17px]" />
    </div>
  );
}

function QueryWindow() {
  const tab = 'h-[21px] border-r border-[#a0a0a0] whitespace-nowrap';
  return (
    <div
      role="dialog"
      aria-label="查询"
      className="absolute top-[134px] left-[274px] z-20 flex h-[514px] w-[852px] flex-col border border-[#2f88e6] bg-[#f0f0f0] shadow-[0_6px_20px_rgba(0,0,0,0.4)]"
    >
      <div className="flex h-[30px] shrink-0 items-center bg-white pl-[7px] font-['Noto_Sans','Noto_Sans_CJK_SC',sans-serif]">
        <AppIcon />
        <span className="ml-[5px]">查询</span>
        <div className="ml-auto flex items-center gap-[30px] pr-[15px]">
          <button type="button" aria-label="最小化" className="w-4">
            <span className="mx-auto block h-px w-[10px] bg-[#bbb]" />
          </button>
          <button type="button" aria-label="最大化" className="flex w-4 justify-center">
            <span className="block size-[10px] border border-black" />
          </button>
          <button type="button" aria-label="关闭">
            <X className="size-4" strokeWidth={1.5} />
          </button>
        </div>
      </div>
      <div className="flex h-7 shrink-0">
        <button type="button" className={`${tab} w-[67px] pr-1`}>清单指引</button>
        <button type="button" className={`${tab} w-[52px] pr-2`}>清单</button>
        <div className={`${tab} flex w-[51px] px-1`}>
          <button type="button" className="h-5 flex-1 border border-[#fff] border-t-[#707070] border-l-[#707070] bg-[#f8f8f8]">定额</button>
        </div>
        <button type="button" className={`${tab} w-[58px]`}>人材机</button>
        <button type="button" className={`${tab} w-[82px]`}>补充人材机</button>
        <div className="ml-auto flex gap-1 pt-[2px] font-['Noto_Sans','Noto_Sans_CJK_SC',sans-serif]">
          <button type="button" className={`${grayButton} w-[73px]`}>插入(I)</button>
          <button type="button" className={`${grayButton} w-[70px]`}>替换(R)</button>
        </div>
      </div>
      <div className="flex min-h-0 flex-1">
        <ChapterPane />
        <QuotaGrid />
      </div>

      {/* hand-drawn markers */}
      <svg viewBox="-40 0 890 520" className="pointer-events-none absolute top-0 -left-10 h-[520px] w-[890px] overflow-visible" fill="none" stroke="#f00" strokeWidth="3">
        <ellipse cx="34" cy="125" rx="71" ry="23" />
        <ellipse cx="130" cy="384" rx="67" ry="27" />
        <ellipse cx="334" cy="492" rx="132" ry="22" />
        <path d="M-4 121h3M-2 120v3" strokeWidth="1" />
      </svg>
    </div>
  );
}

/* ---------- bottom bars ---------- */

function StatusBar() {
  const box = 'h-[20px] overflow-hidden border border-[#d4d4d4] bg-gradient-to-b from-[#fafafa] to-[#efefef] leading-[18px] whitespace-nowrap';
  return (
    <footer className="flex h-[22px] shrink-0 gap-[2px] bg-[#f0f0f0] pt-[2px]">
      <div className={`${box} w-[382px]`}>清单库: 工程量清单项目计量规范(2013-湖北)</div>
      <div className={`${box} w-[382px]`}>定额库: 湖北省房屋建筑与装饰工程消耗量定额及基价表(2013)</div>
      <div className={`${box} flex-1`}>定额专业: 建筑工程</div>
      <div className={`${box} w-[176px]`}>当前分部: 整个项目</div>
      <div className={`${box} w-[189px]`}>计税模式: 增值税(一般计税方法)</div>
    </footer>
  );
}

function TaskItem({ label, children, className = '' }: { label: string; children: ReactNode; className?: string }) {
  return (
    <button type="button" aria-label={label} className={`flex h-10 shrink-0 items-center justify-center ${className || 'w-12'}`}>
      {children}
    </button>
  );
}

function Taskbar() {
  return (
    <footer className="flex h-10 shrink-0 items-center bg-[#030b10] font-['Open_Sans','Noto_Sans_CJK_SC',sans-serif] text-white">
      <TaskItem label="开始" className="w-12 bg-black">
        <svg viewBox="0 0 16 16" className="size-4" fill="#fff">
          <path d="M0 2.300l6.500-.9v6.200H0zM7.300 1.300L16 0v7.600H7.300zM0 8.400h6.500v6.200L0 13.700zM7.300 8.400H16V16l-8.700-1.300z" />
        </svg>
      </TaskItem>
      <div className="flex h-10 w-[344px] shrink-0 items-center bg-[#333] pr-[13px] pl-[9px]">
        <span className="size-[21px] shrink-0 rounded-full border-[3px] border-white" />
        <input
          type="text"
          aria-label="搜索"
          placeholder="在这里输入你要搜索的内容"
          className="ml-[6px] min-w-0 flex-1 bg-transparent text-sm placeholder:text-[#9a9a9a]"
        />
        <Mic className="size-4 text-[#aaa]" strokeWidth={1.5} />
      </div>
      <div className="ml-[3px] flex gap-px">
        <TaskItem label="风车">
          <svg viewBox="0 0 22 22" className="size-[22px]">
            <path d="M6 1c3-1 5 0 5 2 2-2 6-2 8 0s2 5 0 7c2 1 3 4 1 7s-5 4-7 3c-1 2-5 2-8 0s-3-5-2-7C1 12 0 8 1 5s3-4 5-4z" fill="#eceeee" />
            <path d="M11 11C8 8 9 4 12 2M11 11c3-3 7-2 9-1M11 11c3 3 2 7 0 9M11 11c-3 3-7 2-9 1" fill="none" stroke="#030b10" strokeWidth="1.800" />
            <circle cx="11" cy="11" r="1.500" fill="#030b10" />
          </svg>
        </TaskItem>
        <TaskItem label="旋风">
          <svg viewBox="0 0 20 20" className="size-5" fill="none" stroke="#d0d4d6" strokeWidth="1.300">
            <path d="M18 1c-2 3-5 1-9 2C3 4 0 9 3 14c3 5 11 5 14 0 1-3 0-5-3-5-3 0-3 3-1 3M14 5C9 4 5 7 5 11c1 5 7 5 9 2M10 13c-2-2 0-5 3-5" />
          </svg>
        </TaskItem>
        <TaskItem label="浏览器" className="ml-1 w-12">
          <svg viewBox="0 0 20 20" className="size-5">
            <path d="M0 9C1 3 5 0 10 0c6 0 10 4 10 9v3H7c0 5 7 6 11 3v4c-7 3-15 0-15-7 0-3 2-5 4-6-3 0-5 1-7 3zM7 8h7c0-4-6-5-7 0z" fill="#0f78d4" fillRule="evenodd" />
          </svg>
        </TaskItem>
        <TaskItem label="应用商店">
          <svg viewBox="0 0 22 24" className="h-6 w-[22px]">
            <path d="M6 7c0-7 8-8 9-2M10 5c1-4 6-4 7 1" fill="none" stroke="#fff" strokeWidth="1.300" />
            <path d="M1 6l20 1v16L1 21z" fill="#fff" />
            <path d="M4 10l5-.7v4.200H4zM10 9l6-.8v5.300h-6zM4 14.300h5v4L4 17.800zM10 14.300h6v5l-6-.8z" fill="#030b10" />
          </svg>
        </TaskItem>
        <TaskItem label="文件夹">
          <svg viewBox="0 0 22 18" className="h-[18px] w-[22px]">
            <path d="M0 0h8l2 2h11v15H0z" fill="#f5d06f" />
            <path d="M0 5h22v12H0z" fill="#ffe59a" />
            <path d="M4 18v-7h14v7h-4v-3H8v3z" fill="#35a7e0" />
          </svg>
        </TaskItem>
        <TaskItem label="安全浏览器" className="mx-1 w-10 border-b-2 border-[#76b9ed]">
          <svg viewBox="0 0 22 22" className="size-[22px]">
            <circle cx="11" cy="11" r="10" fill="#4fb52a" />
            <path d="M2 20C-2 10 12-2 21 2c-9 0-17 8-19 18z" fill="#c6f08a" />
            <path d="M6 12h11c0-8-11-7-11 0 0 6 8 6 10 2" fill="none" stroke="#fff" strokeWidth="2.500" />
          </svg>
        </TaskItem>
        <TaskItem label="广联达计价" className="w-12 border-b-2 border-[#76b9ed] bg-[#363c40]">
          <AppIcon className="size-6" />
        </TaskItem>
        <TaskItem label="云助手" className="mx-1 w-10 border-b-2 border-[#76b9ed]">
          <svg viewBox="0 0 24 24" className="size-6">
            <rect width="24" height="24" rx="4" fill="#0d94fb" />
            <path d="M12.500 17V8c0-3 3.500-3 3.500 0" fill="none" stroke="#fff" strokeWidth="2" strokeLinecap="round" />
            <path d="M5 10.500c0 3 4 3 7.500 2s6.500-.5 6.500 2M8.500 16.500c0 3 4 3 4 0" fill="none" stroke="#fff" strokeWidth="2" strokeLinecap="round" />
          </svg>
        </TaskItem>
      </div>
      <div className="ml-auto w-14 text-center leading-[17px]">
        16%
        <br />
        CPU使用
      </div>
      <div className="ml-4 flex items-center">
        <ChevronUp className="size-[14px]" />
        <svg viewBox="0 0 18 14" className="ml-2 h-[14px] w-[18px]" fill="none" stroke="#fff">
          <path d="M1 2v3h4V2M3 5v4M2 0v2M4 0v2M6 3.500h9.500v7h-11V8M16 5h1.500v4H16" />
          <path d="M7 5h7v4H7z" fill="#fff" />
        </svg>
        <svg viewBox="0 0 14 14" className="ml-2 size-[14px]" fill="none" stroke="#ddd">
          <path d="M1 12C1 6 6 1 13 1M4 13c0-5 4-9 9-9M7 13c0-3 3-6 6-6M10 13c0-1 1-3 3-3" />
        </svg>
        <Volume2 className="ml-[7px] size-[17px]" strokeWidth={1.5} />
        <KeyboardIcon className="ml-2 h-[13px] w-[22px]" />
        <span className="ml-[10px] text-[13px]">中</span>
        <SogouIcon className="ml-[14px] size-4" />
      </div>
      <div className="ml-[14px] w-[66px] text-center leading-[18px]">
        8:36
        <br />
        2017/9/14
      </div>
      <div className="relative mr-[18px] ml-4">
        <svg viewBox="0 0 18 18" className="h-[18px] w-[18px]">
          <path d="M0 1h17v12H9l-3 4v-4H0z" fill="#fff" />
          <path d="M3 4.500h11M3 7.500h11M3 10.500h7" stroke="#000" />
        </svg>
        <span className="absolute top-[7px] left-2 flex size-4 items-center justify-center rounded-full border border-[#888] bg-[#333] text-[11px] font-bold">2</span>
      </div>
      <span className="mr-1 h-10 w-px bg-[#444]" />
    </footer>
  );
}

export default function App() {
  return (
    <div className="relative flex h-screen w-full flex-col overflow-hidden bg-[#f0f0f0] font-['Noto_Sans','Noto_Sans_CJK_SC',sans-serif] text-xs text-black">
      <TitleBar />
      <MenuBar />
      <MainToolbar />
      <main className="flex min-h-0 flex-1 font-['Noto_Sans_Mono_CJK_SC','Noto_Sans_CJK_SC',monospace]">
        <SideTabs />
        <SectionPanel />
        <div className="flex w-2 shrink-0 items-center">
          <span className="h-[100px] w-[6px] border border-[#808080] bg-[#f0f0f0]" />
        </div>
        <div className="flex min-w-0 flex-1 flex-col">
          <EditToolbar />
          <ProjectGrid />
          <div className="flex h-[30px] shrink-0 items-end">
            <button type="button" className="ml-px h-5 w-[72px] border border-[#fff] border-t-[#707070] border-l-[#707070] bg-[#f6f6f6]">
              工料机显示
            </button>
            <span className="ml-1 h-[18px] border-l border-[#a0a0a0]" />
          </div>
          <div className="flex min-h-0 flex-1">
            <MaterialGrid />
            <ActionPanel />
          </div>
        </div>
      </main>
      <div className="font-['Noto_Sans_Mono_CJK_SC','Noto_Sans_CJK_SC',monospace]">
        <StatusBar />
      </div>
      <Taskbar />
      <div className="font-['Noto_Sans_Mono_CJK_SC','Noto_Sans_CJK_SC',monospace]">
        <QueryWindow />
      </div>
    </div>
  );
}
